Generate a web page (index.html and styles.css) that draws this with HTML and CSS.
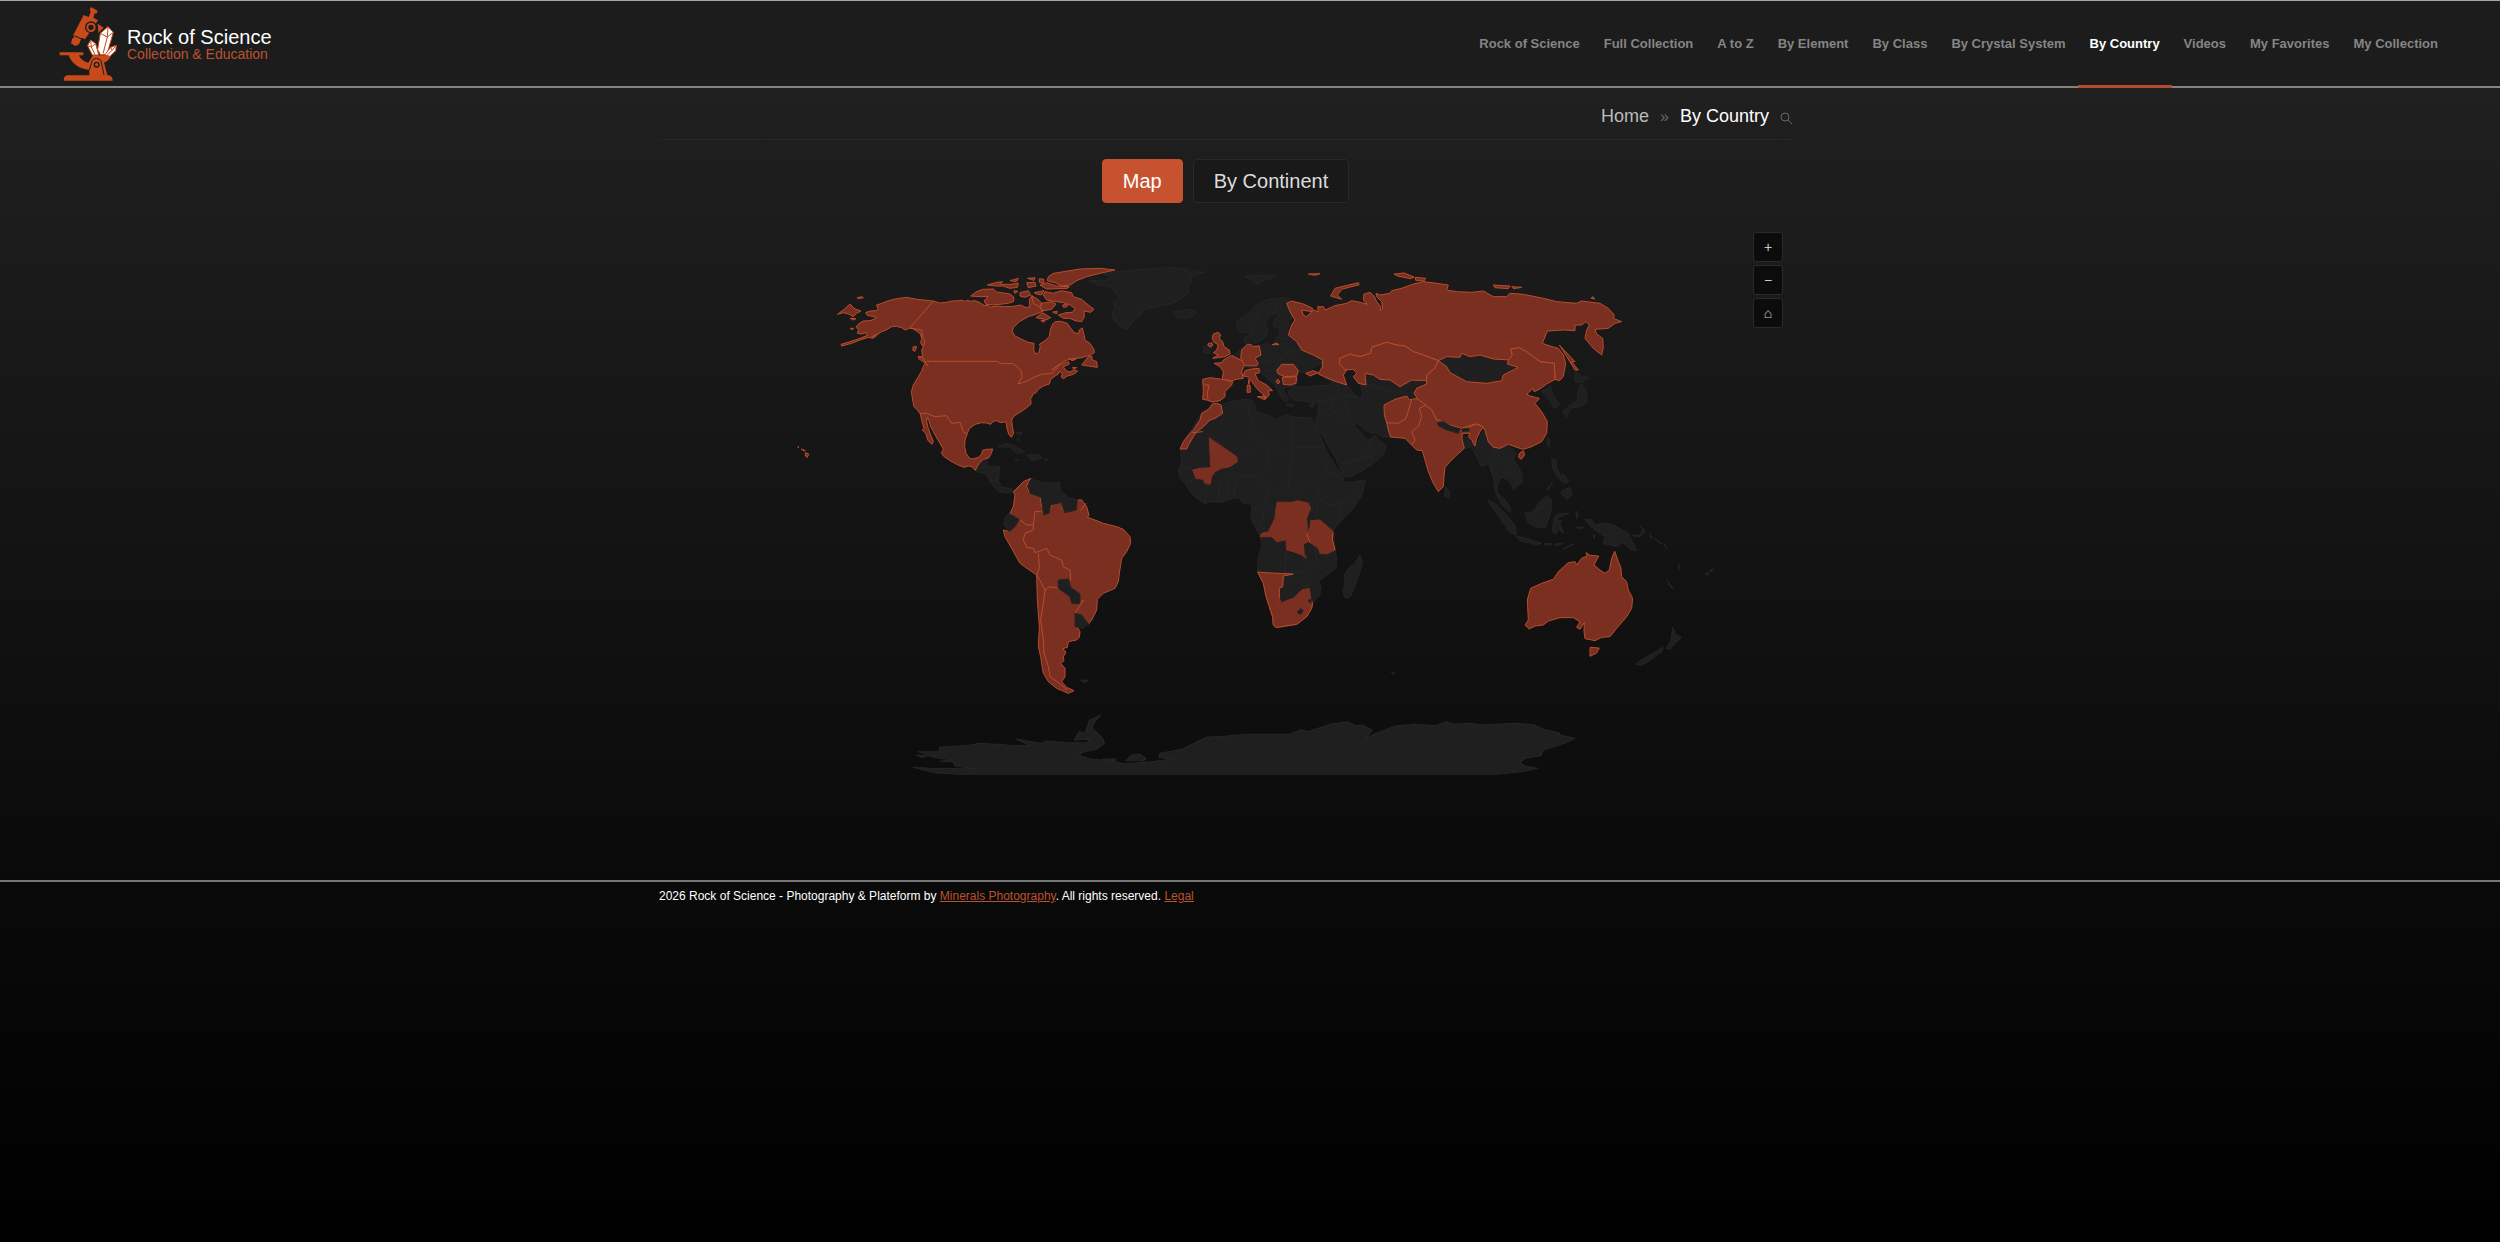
FILE: index.html
```html
<!DOCTYPE html>
<html lang="en">
<head>
<meta charset="utf-8">
<title>By Country - Rock of Science</title>
<link rel="stylesheet" href="styles.css">
</head>
<body>
<header class="site-header">
  <a class="brand" href="#">
    <svg class="brand-mark" viewBox="55 14 180 231" aria-hidden="true">
      <g fill="#c84a1b">
        <path d="M154 20L174 31 170 40 165 39 161 52 175 60 136 117 126 112 118 132 107 137 94 129 98 114 104 112 101 104 132 44 147 50 153 34 150 29Z"/>
        <path d="M60 156H131V165H118Q124 182 146 187L160 165H214Q208 183 193 187L203 224Q219 225 219 241H72Q72 225 86 225H149V209Q101 203 87 165H60Z"/>
        <path d="M174 70L192 82 176 98Z"/>
      </g>
      <circle cx="154" cy="81" r="18" fill="#1c1c1c"/>
      <circle cx="154" cy="81" r="11" fill="none" stroke="#c84a1b" stroke-width="6"/>
      <path d="M149 209L158 180Q170 168 184 181L193 224" fill="none" stroke="#1c1c1c" stroke-width="3"/>
      <circle cx="171" cy="193" r="7" fill="#c84a1b" stroke="#1c1c1c" stroke-width="4"/>
      <path d="M104 106L132 119" stroke="#1c1c1c" stroke-width="3"/>
      <g fill="#fff" stroke="#c84a1b" stroke-width="3" stroke-linejoin="round">
        <path d="M205 79L221 96 202 162 183 164 174 148 182 99Z"/>
        <path d="M205 79L203 110 182 99M203 110L221 96M203 110L190 160" fill="none"/>
        <path d="M153 119L168 130 177 164 158 164 144 136Z"/>
        <path d="M153 119L155 140 144 136M155 140L168 130M155 140L166 163" fill="none"/>
        <path d="M230 135L228 151 211 168 195 164 213 141Z"/>
        <path d="M213 141L217 150 202 165M217 150L230 135" fill="none"/>
      </g>
    </svg>
    <span class="brand-text">
      <span class="brand-name">Rock of Science</span>
      <span class="brand-tagline">Collection &amp; Education</span>
    </span>
  </a>
  <nav class="main-nav" aria-label="Main">
    <a href="#">Rock of Science</a>
    <a href="#">Full Collection</a>
    <a href="#">A to Z</a>
    <a href="#">By Element</a>
    <a href="#">By Class</a>
    <a href="#">By Crystal System</a>
    <a class="active" href="#" aria-current="page">By Country</a>
    <a href="#">Videos</a>
    <a href="#">My Favorites</a>
    <a href="#">My Collection</a>
  </nav>
</header>

<main class="container">
  <nav class="breadcrumb" aria-label="Breadcrumb">
    <a href="#">Home</a>
    <span class="separator">»</span>
    <span class="current">By Country</span>
    <button class="search" aria-label="Search">
      <svg viewBox="0 0 12 12" aria-hidden="true"><circle cx="5" cy="5" r="4"/><path d="M8 8L12 12"/></svg>
    </button>
  </nav>

  <div class="view-switch">
    <button class="view-button selected">Map</button>
    <button class="view-button">By Continent</button>
  </div>

  <section class="map-panel" aria-label="World map">
    <svg class="world" viewBox="-363 -90 3399 1920" role="img" aria-label="Countries in the collection">
      <!-- Greenland -->
      <g class="land" transform="translate(900 -480) scale(1.4158 1)">
        <path d="M18 572L60 570 65 560 50 553 75 545 115 540 160 535 200 533 228 538 222 545 262 547 235 558 235 575 228 590 230 608 210 628 195 640 165 648 135 660 125 680 110 695 100 717 85 708 72 690 68 665 75 655 70 635 85 625 75 605 65 590 40 585Z"/>
      </g>
      <!-- Europe and the Middle East -->
      <g class="land" transform="translate(1140 0)">
        <path d="M40 185L60 182 95 178 110 188 95 200 70 207 50 202ZM255 80L300 76 350 75 335 85 310 92 290 101 275 90ZM130 290L145 283 155 290 150 308 130 310Z"/>
        <path d="M230 215L250 200 270 185 290 165 315 152 350 144 380 143 390 148 380 155 390 180 398 200 385 215 385 232 360 232 345 235 338 222 345 205 358 195 350 188 335 195 322 210 315 225 325 240 315 262 298 275 285 282 275 265 268 245 250 250 235 242Z"/>
        <path d="M275 250L280 220 300 180 322 162 345 160 352 188M345 160L370 155 385 150" fill="none"/>
        <path d="M255 262L268 255 272 270 262 283 252 278Z"/>
        <path d="M222 318L240 300 250 290 300 285 320 282 335 285 345 275 350 262 360 250 358 238 385 236 388 250 390 265 415 285 430 298 460 310 487 325 485 340 465 348 455 358 440 365 430 368 415 365 410 378 412 395 405 408 385 412 378 410 370 420 385 450 375 455 365 445 355 425 345 405 330 392 310 375 298 365 296 352 270 352 245 355 225 345Z"/>
        <path d="M303 315L330 325 360 332 372 310 368 288 350 285M368 310L420 302 430 298M350 262L385 268M300 340L325 332 355 335 350 362M298 365L325 362 350 362M325 365L345 400" fill="none"/>
        <path d="M385 425L400 412 440 410 470 408 505 405 520 398 495 385 520 388 550 402 565 410 580 430 590 440 608 446 606 420 600 405 615 400 612 372 630 368 650 380 680 382 700 395 712 408 740 395 750 390 800 390 780 420 760 430 740 435 710 445 672 465 675 500 690 525 693 562 665 560 650 548 635 550 615 540 600 525 585 515 582 530 600 545 612 562 625 570 640 560 648 555 655 570 680 590 668 615 640 640 610 660 575 678 555 682 545 665 530 630 510 595 490 560 470 530 468 510 475 480 475 455 455 458 440 455 425 452 405 450 390 440Z"/>
        <path d="M475 455L525 445 555 452 575 510M520 450L510 475 480 495M510 475L545 500 582 525M530 405L545 440 590 440M608 415L640 405 700 430 712 445M612 400L660 410 700 430M550 640L600 625 640 620M625 570L635 600 600 625" fill="none"/>
        <path d="M378 462L402 464 400 468 380 467ZM447 466L465 460 458 472Z"/>
      </g>
      <!-- Africa -->
      <g class="land" transform="translate(1140 570)">
        <path d="M62 25L65 70 55 90 60 115 75 130 90 155 110 175 135 190 155 185 185 187 210 178 235 172 250 190 270 188 277 205 272 235 290 270 302 290 305 320 295 350 292 395 310 430 318 470 330 510 340 545 345 563 375 560 410 553 440 530 455 505 458 490 480 465 483 440 475 425 500 405 528 385 530 355 525 325 522 290 520 270 545 240 580 205 605 165 617 120 600 122 570 128 552 125 548 108 530 85 515 60 500 35 485 0 470 -35 462 -55 455 -65 400 -70 375 -75 350 -62 320 -75 290 -85 285 -100 275 -120 255 -122 220 -118 185 -105 155 -112 150 -95 120 -75Z"/>
        <path d="M600 345L607 365 600 395 580 450 570 472 555 473 548 455 555 430 552 410 565 385 585 370Z"/>
        <path d="M130 -25L230 50 325 10 290 -5 270 -70 262 -110M325 15L395 42 398 -65M398 22H490M395 42L385 140 325 160 300 110 235 105 225 125 222 172M400 150L430 140 470 130 475 175 445 190M325 160L315 190 275 210M325 15L320 80 300 110M470 130L500 95 540 110M475 175L510 195 540 190 590 155M475 175L470 235 520 270M540 190L538 240M135 190L140 130M175 185L178 125 215 118M200 180L205 120M60 80L100 90M75 130L108 115M110 175L130 150M378 330L375 395 430 395 470 360 465 325M375 395L435 440 460 425M275 210H315L300 265 290 270M490 60L500 95M470 365L485 390" fill="none"/>
      </g>
      <!-- Asia -->
      <g class="land" transform="translate(1500 30)">
        <path d="M470 300L545 275 700 290 720 322 670 350 620 375 550 368Z"/>
        <path d="M360 375L440 360 425 395 395 420 370 410Z"/>
        <path d="M555 545L575 545 590 560 600 530 612 510 625 550 650 565 690 560 710 580 700 595 725 640 728 665 700 688 690 665 665 650 655 665 650 695 670 715 690 740 692 758 670 740 655 715 645 690 640 650 625 610 605 620 590 590 575 560Z"/>
        <path d="M628 600L650 575 665 600 690 610 710 640M665 640L690 635 705 650M640 650L630 600" fill="none"/>
        <path d="M543 528L565 535 573 560 558 565ZM497 680L509 698 506 713 494 708ZM785 395L812 378 815 395 838 435 822 445 805 415ZM885 335L905 350 925 352 905 368 885 365ZM903 372L915 385 922 425 900 440 870 445 860 472 848 455 870 435 890 425 895 395ZM803 535L811 540 807 562 801 552Z"/>
        <path d="M815 598L828 600 830 625 845 650 835 655 818 625ZM850 640L865 665 855 670 840 660ZM850 690L870 682 876 705 862 718 842 700ZM818 665L800 690 804 690Z"/>
      </g>
      <!-- Oceania -->
      <g class="land" transform="translate(2100 390)">
        <path d="M22 360L45 370 75 400 105 435 108 465 90 458 60 415 40 385ZM108 468L140 475 185 490 170 494 120 482ZM135 400L160 395 180 365 200 347 215 360 212 400 195 445 165 440 145 430ZM222 410L235 402 268 400 235 412 230 425 245 420 240 432 250 460 235 445 228 462 217 455ZM315 418L335 418 345 435 375 428 400 435 445 460 470 512 450 508 430 488 410 500 370 490 375 470 345 450 325 432Z"/>
        <path d="M400 435V498M150 400L185 385 200 365" fill="none"/>
        <path d="M193 492L215 490 212 496ZM222 492L248 490 230 497ZM248 508L282 491 262 502ZM288 392L296 400 290 418ZM290 440L312 443 292 446ZM340 463L345 466 341 475ZM458 467L480 465 490 448 494 455 480 470ZM480 437L494 450 488 446ZM508 460L518 475 512 472ZM525 475L545 490 540 490ZM552 490L562 505 556 500ZM596 552L600 570 596 562ZM562 602L580 625 572 622ZM675 580L685 577 684 586ZM688 573L702 566 692 575Z"/>
        <path d="M578 742L588 765 605 772 585 790 570 808 558 805 572 785ZM550 802L545 815 500 848 480 856 467 852 500 830Z"/>
      </g>
      <g class="land collected" transform="translate(2100 390)">
        <path d="M135 735L145 720 142 660 152 625 185 610 220 598 235 575 265 548 285 545 290 555 305 535 322 528 318 518 330 526 356 528 342 555 360 570 375 580 388 570 395 535 404 514 415 545 422 560 425 590 440 605 445 630 458 655 455 685 440 710 410 745 390 770 365 772 345 782 315 776 312 755 313 728 300 748 290 742 300 725 280 713 240 713 205 723 190 735 165 738 148 747Z"/>
        <path d="M330 802L358 804 350 819 330 829Z"/>
      </g>
      <!-- Central America and the Caribbean -->
      <g class="land">
        <path d="M586 661L605 632 622 630 620 648 660 650 655 690 665 712 695 715 700 725 680 730 655 725 638 705 615 670 590 665Z"/>
        <path d="M655 590L680 580 710 590 735 607 710 610 690 592ZM740 615L775 613 785 625 755 632ZM703 627L718 628 710 632ZM792 627L806 627 800 631ZM708 548L724 547 722 555ZM712 562L718 570 714 574Z"/>
        <path d="M600 655L620 648M615 670L640 665 658 652M630 690L655 695" fill="none"/>
      </g>
      <!-- North America -->
      <g class="land collected">
        <path d="M460 153L478 159 500 157 515 153 540 152 548 150 552 155 562 151 572 154 585 152 600 158 612 166 626 166 632 172 650 168 670 170 700 169 722 165 738 173 750 170 748 150 756 136 768 150 778 165 783 180 790 183 770 192 745 200 718 215 700 232 697 245 705 258 725 268 745 277 762 280 761 300 767 312 776 308 781 290 778 283 795 272 808 260 811 240 818 222 825 215 842 214 862 220 870 232 882 247 895 252 898 240 907 234 912 255 915 270 930 280 938 292 942 300 943 308 930 315 905 323 880 326 862 330 845 338 828 350 815 360 840 344 865 335 868 342 850 350 858 362 868 366 885 360 893 364 880 373 862 378 850 386 843 380 848 372 838 364 835 372 825 378 812 388 808 402 790 408 775 418 768 428 758 432 756 440 752 445 753 462 738 475 715 490 700 500 695 510 697 530 701 550 694 562 686 552 681 535 678 515 662 518 650 512 640 514 632 523 620 519 605 518 585 523 568 536 562 550 555 570 554 590 558 610 568 624 578 627 595 622 605 612 608 601 620 598 638 597 634 610 626 624 610 628 600 637 592 648 586 661 576 650 565 648 552 652 530 643 510 632 490 618 484 608 490 598 480 580 468 560 460 545 452 530 447 512 442 502 440 515 445 535 452 555 460 575 456 583 444 572 437 550 427 540 432 535 426 515 421 492 412 480 402 470 398 450 394 425 400 405 412 385 424 365 430 350 436 338 425 332 416 326 415 320 428 320 425 300 430 290 422 280 425 265 420 250 412 245 398 236 388 235 375 240 365 233 350 229 335 230 318 240 305 245 290 255 278 265 265 262 240 270 215 280 185 288 183 283 210 275 240 265 262 256 258 248 245 252 232 250 236 238 228 232 235 222 250 213 270 212 285 206 290 202 262 196 257 188 270 183 290 182 294 175 289 165 300 162 325 152 350 146 380 142 410 148Z"/>
        <path d="M460 153L390 233 412 238 425 240 428 260 435 275 430 290M415 318L430 325 445 350M440 334H650L665 341 700 341 722 360 727 380 714 402 745 392 765 380 785 373 815 370 835 352M421 490L440 490 465 500 500 497 515 520 540 517 550 545 562 552" fill="none"/>
        <path d="M172 193L190 180 210 162 225 177 243 183 230 190 220 200 208 193 190 188ZM231 143L245 140 250 143 235 146ZM210 205L228 206 220 210ZM211 235L222 235 216 239ZM275 260L292 252 285 262ZM400 290L410 290 405 304 398 300ZM53 590L57 591 55 593ZM64 597L76 602 72 603ZM76 608L86 612 82 622 76 618Z"/>
        <path d="M572 138L590 125 608 118 640 117 650 126 690 132 702 142 700 155 685 160 660 163 640 165 618 163 612 152 625 140 600 140Z"/>
        <path d="M622 105L650 97 668 95 660 103 690 103 715 100 712 112 690 115 668 108 650 108ZM690 92L715 85 710 95ZM742 85L765 83 762 91ZM740 98L765 97 768 108 745 113ZM778 86L792 88 790 100 778 97Z"/>
        <path d="M805 80L820 70 870 62 900 57 960 55 1005 60 960 70 920 80 890 92 870 105 845 108 825 98 802 92ZM780 105L800 98 830 108 868 110 862 115 800 117Z"/>
        <path d="M720 128L745 122 752 135 735 142 720 138ZM762 128L792 122 784 135 770 132ZM702 122L714 124 704 130ZM755 138L770 145 786 160 778 170 760 160ZM785 160L815 155 828 162 815 178 790 182 782 172ZM818 186L832 184 830 192Z"/>
        <path d="M795 125L820 130 845 122 875 128 880 140 905 148 925 165 942 178 932 187 912 183 913 200 905 215 885 212 870 205 850 205 835 195 858 188 878 187 885 175 870 165 850 158 830 155 800 150 790 135Z"/>
        <path d="M768 203L788 188 812 203 800 209ZM783 211L796 212 788 217ZM905 345L925 320 935 318 937 330 950 335 952 352 938 350 925 348ZM848 165L860 163 862 170 850 172ZM868 326L888 328 876 332ZM878 352L890 353 880 358Z"/>
      </g>
      <!-- South America -->
      <g transform="translate(600 630)">
        <g class="land collected">
          <path d="M153 55L145 65 140 80 150 100 180 110 185 140 210 150 215 135 243 128 250 150 290 152 292 120 305 120 320 140 327 165 322 172 345 180 370 190 410 200 430 208 450 230 452 250 440 275 425 295 418 340 415 365 405 385 370 400 352 418 350 450 335 480 325 492 300 480 285 490 300 515 298 532 290 540 265 545 262 562 248 566 258 576 250 590 252 602 242 610 255 625 255 650 245 665 260 682 282 692 265 700 230 685 205 665 190 640 186 618 182 590 175 560 178 500 172 420 170 345 145 328 120 310 95 265 75 230 70 210 90 215 110 185 90 160 100 140 105 105 100 95 115 80 130 65Z"/>
          <path d="M118 178L140 195 160 195 160 210 135 220 130 240 140 262 160 265 165 278 200 265 210 285 245 300 250 320 270 330 272 360M170 345L178 325 175 280M170 345L185 370 195 390 210 380 235 385M195 390L190 430 182 480 190 540 192 580 205 620 210 650 235 668 262 690M160 195L165 155 185 155M300 430L310 420 285 460 325 492M302 152L318 130" fill="none"/>
        </g>
        <path class="land" d="M85 160L118 178 105 200 88 215 72 195 75 175ZM145 75L155 58 190 68 238 68 240 90 270 115 292 118 290 150 255 158 243 128 212 135 208 158 192 165 183 112 150 100ZM235 360L265 357 272 382 300 402 300 430 275 430 270 410 235 385ZM285 460L305 465 325 492 308 505 285 500ZM302 661L325 660 315 668Z"/>
      </g>
      <!-- Western Europe and Morocco -->
      <g class="land collected" transform="translate(1140 0)">
        <path d="M160 252L175 247 182 255 178 265 188 275 192 290 208 300 210 312 195 320 158 325 175 315 160 308 170 300 175 285 160 275 157 262ZM143 282L155 278 159 286 149 291Z"/>
        <path d="M162 340L185 338 190 330 215 316 245 332 255 340 250 352 245 365 250 385 228 388 215 393 187 388 190 365 180 350Z"/>
        <path d="M128 388L150 383 187 388 218 395 215 405 195 425 195 440 180 452 158 456 140 450 128 448 130 425Z"/>
        <path d="M133 405L147 405 142 430 144 448" fill="none"/>
        <path d="M245 300L262 283 272 283 280 290 298 288 303 315 285 325 295 340 290 348 255 347 242 325Z"/>
        <path d="M250 378L255 362 275 357 297 355 298 368 285 372 295 392 320 405 338 422 325 422 328 435 316 448 308 432 290 415 272 390 262 380ZM292 440L317 439 314 449ZM262 405L270 405 271 427 261 427ZM266 388L269 396 266 402Z"/>
        <path d="M350 362L365 343 400 343 415 362 410 378 375 380 355 372ZM367 382L410 380 408 400 390 405 370 403ZM348 393L355 388 360 396 354 402ZM336 284L351 279 356 284ZM437 370L460 362 475 368 450 378Z"/>
        <path d="M158 462L170 460 183 465 188 490 165 505 150 510 130 530 110 545 100 560 85 585 80 597 60 597 70 575 85 555 100 540 120 510 125 490 145 478Z"/>
        <path d="M97 548L128 545" fill="none"/>
      </g>
      <!-- Mali, DR Congo, Tanzania, Namibia, South Africa -->
      <g class="land collected" transform="translate(1140 570)">
        <path class="inland" d="M148 -6L230 50 232 65 210 80 185 85 165 95 155 110 150 133 135 130 130 118 108 115 98 90 120 85 152 83Z"/>
        <path class="inland" d="M352 186L370 187 395 187 415 182 445 190 452 205 440 235 442 265 440 280 445 305 430 312 433 345 440 355 425 345 400 335 380 330 378 300 350 305 335 290 300 290 305 280 325 275 335 255 345 235 348 205Z"/>
        <path class="inland" d="M452 242L480 240 520 275 517 300 525 330 500 342 480 340 475 325 450 308 440 280 450 262Z"/>
        <path d="M440 280L450 308M518 280L517 300 525 330" fill="none"/>
        <path d="M293 396L315 398 400 402 370 408 368 440 358 445 358 500 345 510 328 500 318 470 310 430Z"/>
        <path class="inland" d="M328 500L358 500 358 475 365 488 385 480 400 475 425 450 448 445 452 475 458 488 455 505 440 530 410 553 375 558 350 563 340 555 338 530Z"/>
        <path d="M328 500L338 530 340 555 350 563 375 558 410 553 440 530 455 505 458 488" fill="none"/>
      </g>
      <path class="land" d="M1552 1086L1562 1076 1570 1082 1560 1094ZM1584 1050L1594 1048 1592 1060Z"/>
      <!-- Russia, Kazakhstan, China and South Asia -->
      <g class="land collected" transform="translate(1500 30)">
        <path d="M20 130L35 123 70 132 98 145 95 155 65 150 70 165 80 170 100 150 115 155 113 140 130 140 135 150 165 137 200 130 215 122 245 128 262 133 250 120 252 102 270 97 282 108 290 125 302 140 300 152 308 145 305 125 290 110 288 100 300 105 330 100 335 92 365 85 400 72 430 65 470 70 505 75 500 90 530 95 575 97 610 93 640 110 680 110 690 100 730 103 790 115 830 125 890 130 905 123 960 130 985 145 1003 165 1000 175 1025 185 1005 190 985 205 945 208 950 222 968 235 970 262 965 285 940 265 915 235 920 210 928 195 918 185 905 195 885 195 885 212 850 210 802 213 787 250 810 258 835 265 850 285 857 310 850 350 838 362 825 358 823 310 780 305 740 275 715 263 692 268 697 285 690 300 640 297 600 285 570 290 545 280 540 292 500 290 475 302 430 285 400 275 375 258 350 255 320 247 275 262 272 280 240 290 210 282 180 295 185 320 200 330 190 345 200 375 160 362 115 342 127 320 128 300 100 285 65 270 50 245 25 225 35 195 45 180 30 155Z"/>
        <path d="M180 295L210 282 240 290 272 280 275 262 320 247 350 255 375 258 400 275 430 285 475 302 465 325 440 345 440 362 395 360 360 380 330 360 300 358 280 345 255 340 258 375 235 370 220 350 230 340 220 328 195 330 178 310Z"/>
        <path d="M475 302L500 320 510 338 560 365 620 370 665 362 670 345 715 322 682 312 685 300 697 285 692 268 715 263 740 275 780 305 823 310 825 358 800 372 778 388 762 395 760 385 740 402 750 408 778 415 765 430 785 455 802 485 800 520 785 545 750 562 728 568 705 560 685 553 660 565 640 562 625 545 615 510 600 495 585 492 545 505 500 492 465 475 450 450 430 430 415 420 402 400 410 385 440 372 440 345 465 325Z"/>
        <path d="M312 435L345 418 380 408 388 420 410 415 430 430 455 450 470 480 505 505 540 515 545 505 570 500 590 492 610 500 600 515 590 535 585 558 575 540 565 530 570 520 548 520 545 535 553 565 530 585 510 605 495 622 492 650 490 680 475 695 460 670 445 635 435 600 427 572 410 570 395 555 375 535 332 531 325 510 320 488 313 465Z"/>
        <path d="M320 488L355 490 378 475 390 435 395 418M395 555L405 540 395 515 415 500 425 470 418 445 438 435" fill="none"/>
        <path d="M718 580L730 572 734 584 724 598 716 592ZM838 255L850 268 885 305 875 305 895 330 885 330 860 290ZM235 68L205 75 165 85 152 108 185 118 172 105 185 88 238 74ZM342 42L372 39 402 51 392 56 352 48ZM405 52L437 55 432 63 407 61ZM85 42L120 41 105 46ZM640 75L690 78 685 86 645 83ZM695 80L725 82 700 86ZM933 115L939 110 944 117Z"/>
      </g>
      <path class="land" d="M1972 518L1990 515 2015 530 2040 540 2035 550 2000 540 1975 527ZM2045 537L2065 535 2068 543 2048 545Z"/>
      <!-- Antarctica -->
      <g class="land" transform="translate(-420 1350) scale(1.8367 1)">
        <path d="M447 202L475 205 550 207 515 198 512 186 490 184 510 180 480 172 455 155 490 155 490 142 540 135 555 130 600 135 640 138 615 117 640 125 655 130 665 123 700 128 730 128 735 118 710 120 718 95 728 100 730 85 735 60 752 45 740 70 738 85 755 115 758 130 745 148 720 158 718 168 740 178 772 183 790 192 830 186 868 178 848 172 850 160 885 148 905 130 925 112 960 108 990 103 1060 103 1080 90 1090 95 1130 72 1155 65 1170 78 1180 75 1195 90 1185 115 1205 98 1235 78 1265 73 1300 77 1318 65 1330 73 1355 70 1375 75 1430 70 1460 75 1475 88 1500 98 1502 105 1527 115 1510 130 1475 150 1470 168 1445 175 1437 188 1445 198 1465 205 1440 215 1400 223 520 223 480 218Z"/>
        <path d="M794 182L803 165 815 162 826 175 822 182ZM452 165L470 168 460 172ZM755 178L777 176 776 182Z"/>
      </g>
      <path class="land" d="M1834 1266L1844 1267 1839 1273Z"/>
    </svg>
    <div class="map-controls">
      <button aria-label="Zoom in">+</button>
      <button aria-label="Zoom out">−</button>
      <button aria-label="Reset view">⌂</button>
    </div>
  </section>
</main>

<footer class="site-footer">
  <p class="container">2026 Rock of Science - Photography &amp; Plateform by <a href="#">Minerals Photography</a>. All rights reserved. <a href="#">Legal</a></p>
</footer>
</body>
</html>
```
FILE: styles.css
```css
* {
  box-sizing: border-box;
}

html {
  min-height: 100%;
  background: linear-gradient(#222, #000);
}

body {
  margin: 0;
  color: #fff;
  font-family: "Liberation Sans", Arial, sans-serif;
  font-size: 12px;
}

a {
  color: inherit;
  text-decoration: none;
}

button {
  font-family: inherit;
  cursor: pointer;
}

.site-header {
  display: flex;
  justify-content: space-between;
  height: 88px;
  padding: 0 50px 0 58px;
  background: #1c1c1c;
  border-top: 1px solid #a5a8a6;
  border-bottom: 2px solid #85827f;
}

.brand {
  display: flex;
  align-items: center;
  gap: 9px;
}

.brand-mark {
  width: 60px;
  height: 77px;
}

.brand-text {
  display: flex;
  flex-direction: column;
}

.brand-name {
  font-size: 20px;
  line-height: 20px;
}

.brand-tagline {
  color: #b9532f;
  font-size: 14px;
  line-height: 14px;
}

.main-nav {
  display: flex;
  margin-bottom: -2px;
}

.main-nav a {
  display: flex;
  align-items: center;
  padding: 0 12px;
  border-bottom: 3px solid transparent;
  color: #858585;
  font-size: 13px;
  font-weight: bold;
}

.main-nav .active {
  border-color: #b54a2c;
  color: #fff;
}

.container {
  max-width: 1182px;
  margin: 0 auto;
  padding-right: 49px;
}

.breadcrumb {
  display: flex;
  align-items: center;
  justify-content: flex-end;
  gap: 11px;
  height: 52px;
  padding-top: 6px;
  border-bottom: 1px solid #262626;
  color: #bbb;
  font-size: 18px;
}

.separator {
  color: #666;
  font-size: 16px;
}

.current {
  color: #fff;
}

.search {
  padding: 2px 0 0;
  border: 0;
  background: none;
}

.search svg {
  display: block;
  width: 12px;
  height: 12px;
  overflow: visible;
  fill: none;
  stroke: #666;
}

.view-switch {
  display: flex;
  justify-content: center;
  gap: 10px;
  padding: 19px 0 17px;
}

.view-button {
  height: 44px;
  padding: 0 20px;
  border: 1px solid #292929;
  border-radius: 4px;
  background: #191919;
  color: #ddd;
  font-size: 20px;
}

.view-button.selected {
  border-color: #c65230;
  background: #c65230;
  color: #fff;
}

.map-panel {
  position: relative;
}

.world {
  display: block;
  width: 100%;
}

.land {
  fill: #1f1f1f;
  stroke: #252525;
  stroke-width: 3;
  stroke-linejoin: round;
}

.collected {
  fill: #7b2f20;
  stroke: #b94c2d;
}

.inland {
  stroke: #7b2f20;
}

.map-controls {
  position: absolute;
  top: 12px;
  right: 9px;
  display: flex;
  flex-direction: column;
  gap: 3px;
}

.map-controls button {
  width: 30px;
  height: 30px;
  padding: 0;
  border: 1px solid #2a2a2a;
  border-radius: 3px;
  background: #0c0c0c;
  color: #ccc;
  font-size: 14px;
}

.site-footer {
  margin-top: 20px;
  border-top: 2px solid #777;
}

.site-footer .container {
  padding-top: 7px;
  line-height: 14px;
}

.site-footer a {
  color: #b9532f;
  text-decoration: underline;
}
```
